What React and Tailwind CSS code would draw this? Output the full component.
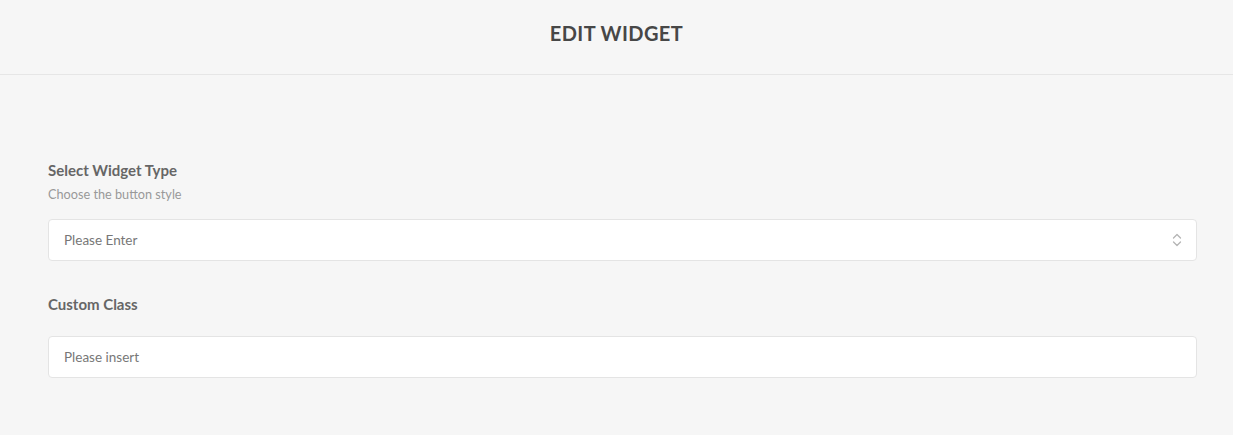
import React from 'react';

function Chevrons() {
  return (
    <svg width="10" height="16" viewBox="0 0 10 16" fill="none" stroke="#b5b5b5" strokeWidth="1.3" strokeLinecap="round" strokeLinejoin="round">
      <path d="M1.5 6 L5 2.5 L8.5 6" />
      <path d="M1.5 10 L5 13.5 L8.5 10" />
    </svg>
  );
}

export default function App() {
  return (
    <div className="min-h-[435px] bg-[#f6f6f6] text-[#555]" style={{ fontFamily: 'Lato, "Open Sans", sans-serif' }}>
      <div className="h-[75px] border-b border-[#e6e6e6] flex items-center justify-center">
        <h1 className="text-[20px] font-bold tracking-[0.4px] text-[#474747] mt-[-8px]">EDIT WIDGET</h1>
      </div>
      <div className="pl-12 pr-[36px] pt-[85px]">
        <div className="text-[15px] font-bold text-[#666] leading-5">Select Widget Type</div>
        <div className="text-[12.7px] text-[#999] mt-[6px] leading-4">Choose the button style</div>
        <div className="mt-[17px] h-[42px] bg-white border border-[#e4e4e4] rounded-[4px] flex items-center justify-between pl-[15px] pr-[14px]">
          <span className="text-[13.5px] text-[#777]">Please Enter</span>
          <Chevrons />
        </div>
        <div className="text-[15px] font-bold text-[#666] leading-5 mt-[33px]">Custom Class</div>
        <div className="mt-[22px] h-[42px] bg-white border border-[#e4e4e4] rounded-[4px] flex items-center pl-[15px]">
          <span className="text-[13.5px] text-[#777]">Please insert</span>
        </div>
      </div>
    </div>
  );
}
